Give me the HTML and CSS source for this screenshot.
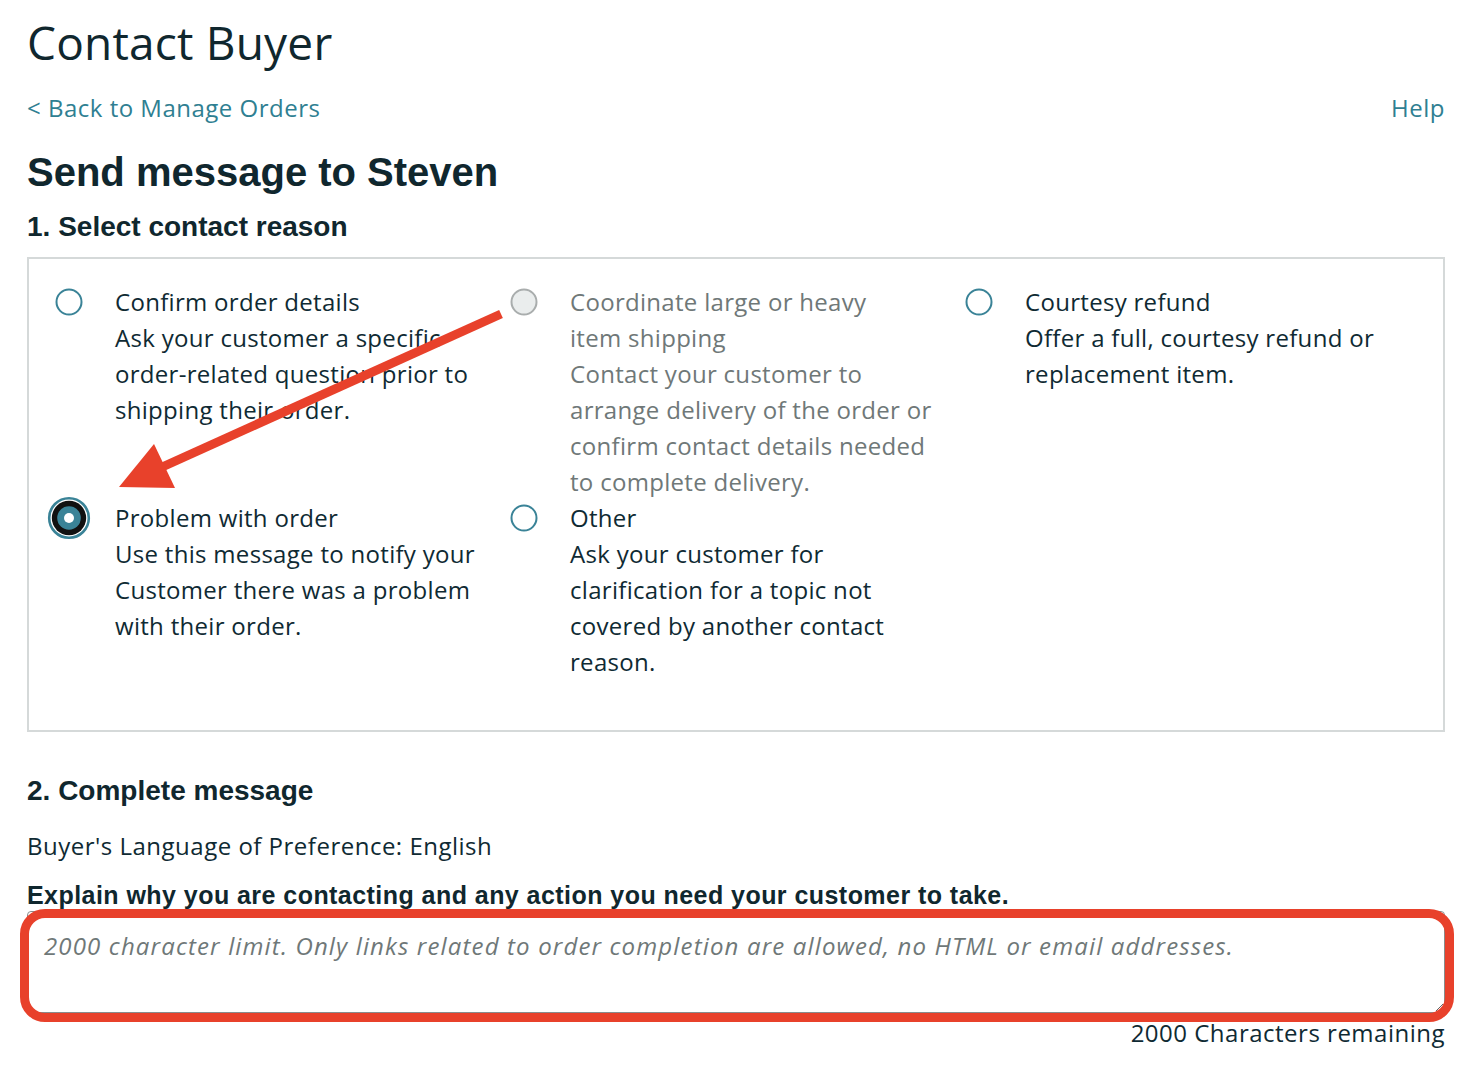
FILE: index.html
```html
<!DOCTYPE html>
<html lang="en">
<head>
<meta charset="utf-8">
<title>Contact Buyer</title>
<link rel="stylesheet" href="styles.css">
</head>
<body>
<div class="page">
  <h1 class="title">Contact Buyer</h1>
  <div class="nav">
    <a class="link" href="#">&lt; Back to Manage Orders</a>
    <a class="link" href="#">Help</a>
  </div>
  <h2 class="send">Send message to Steven</h2>
  <h3 class="step">1. Select contact reason</h3>
  <div class="reasons">
    <div class="reason">
      <span class="radio"><svg viewBox="0 0 28 28" width="28" height="28"><circle cx="14" cy="14" r="12.5" fill="#fff" stroke="#3a8397" stroke-width="2"/></svg></span>
      <div class="text">
        <div class="name">Confirm order details</div>
        <div class="desc">Ask your customer a specific order-related question prior to shipping their order.</div>
      </div>
    </div>
    <div class="reason disabled">
      <span class="radio"><svg viewBox="0 0 28 28" width="28" height="28"><circle cx="14" cy="14" r="12.5" fill="#eaeded" stroke="#a9adad" stroke-width="2"/></svg></span>
      <div class="text">
        <div class="name">Coordinate large or heavy<br>item shipping</div>
        <div class="desc">Contact your customer to arrange delivery of the order or confirm contact details needed to complete delivery.</div>
      </div>
    </div>
    <div class="reason">
      <span class="radio"><svg viewBox="0 0 28 28" width="28" height="28"><circle cx="14" cy="14" r="12.5" fill="#fff" stroke="#3a8397" stroke-width="2"/></svg></span>
      <div class="text">
        <div class="name">Courtesy refund</div>
        <div class="desc">Offer a full, courtesy refund or replacement item.</div>
      </div>
    </div>
    <div class="reason">
      <span class="radio selected"><svg viewBox="-8 -8 44 44" width="44" height="44"><circle cx="14" cy="14" r="19.8" fill="#fff" stroke="#3a8397" stroke-width="2.6"/><circle cx="14" cy="14" r="17.2" fill="#111"/><circle cx="14" cy="14" r="11.8" fill="#3a8397"/><circle cx="14" cy="14" r="5" fill="#fff"/></svg></span>
      <div class="text">
        <div class="name">Problem with order</div>
        <div class="desc">Use this message to notify your Customer there was a problem with their order.</div>
      </div>
    </div>
    <div class="reason">
      <span class="radio"><svg viewBox="0 0 28 28" width="28" height="28"><circle cx="14" cy="14" r="12.5" fill="#fff" stroke="#3a8397" stroke-width="2"/></svg></span>
      <div class="text">
        <div class="name">Other</div>
        <div class="desc">Ask your customer for clarification for a topic not covered by another contact reason.</div>
      </div>
    </div>
  </div>
  <h3 class="step step2">2. Complete message</h3>
  <p class="lang">Buyer's Language of Preference: English</p>
  <p class="explain">Explain why you are contacting and any action you need your customer to take.</p>
  <div class="msg">
    <textarea class="msg-input" placeholder="2000 character limit. Only links related to order completion are allowed, no HTML or email addresses."></textarea>
    <div class="highlight"></div>
  </div>
  <div class="remaining">2000 Characters remaining</div>
  <svg class="arrow" width="1476" height="1080" viewBox="0 0 1476 1080">
    <line x1="501" y1="314" x2="160" y2="468" stroke="#e8412b" stroke-width="9"/>
    <polygon points="119,487 154,444 175,488" fill="#e8412b"/>
  </svg>
</div>
</body>
</html>
```

FILE: styles.css
```css
html, body {
  margin: 0;
  padding: 0;
  background: #fff;
}

.page {
  position: relative;
  padding: 14px 31px 0 27px;
  font-family: "Open Sans", "Liberation Sans", sans-serif;
  color: #0f2a33;
  min-height: 1080px;
  box-sizing: border-box;
}

.title {
  margin: 0;
  font-size: 46px;
  letter-spacing: 0.2px;
  line-height: 56px;
  font-weight: 400;
  color: #10272e;
}

.nav {
  margin-top: 20px;
  display: flex;
  justify-content: space-between;
  font-size: 24px;
  letter-spacing: 0.5px;
  line-height: 36px;
}

.link {
  color: #2f7f92;
  text-decoration: none;
}

.send {
  margin: 23px 0 0;
  font-family: "Liberation Sans", Arial, sans-serif;
  font-weight: 700;
  font-size: 40px;
  line-height: 46px;
  color: #10272e;
}

.step {
  margin: 16px 0 0;
  font-family: "Liberation Sans", Arial, sans-serif;
  font-weight: 700;
  font-size: 28px;
  line-height: 32px;
  color: #10272e;
}

.reasons {
  margin-top: 14px;
  border: 2px solid #d5d9d9;
  padding: 25px 0 50px 26px;
  display: grid;
  grid-template-columns: repeat(3, 455px);
}

.reason {
  display: flex;
  align-items: flex-start;
  font-size: 24px;
  letter-spacing: 0.3px;
  line-height: 36px;
}

.radio {
  flex: none;
  width: 28px;
  height: 28px;
  margin-top: 4px;
  margin-right: 32px;
  display: block;
}

.radio svg {
  display: block;
}

.radio.selected svg {
  margin: -8px 0 0 -8px;
}

.text {
  width: 368px;
}

.disabled .text {
  color: #6f7878;
}

.step2 {
  margin-top: 43px;
}

.lang {
  margin: 21px 0 0;
  font-size: 24px;
  letter-spacing: 0.5px;
  line-height: 36px;
}

.explain {
  margin: 17px 0 0;
  font-family: "Liberation Sans", Arial, sans-serif;
  font-weight: 700;
  font-size: 25px;
  letter-spacing: 0.45px;
  line-height: 28px;
  color: #10272e;
}

.msg {
  position: relative;
  margin-top: 2px;
}

.msg-input {
  display: block;
  width: 100%;
  height: 102px;
  box-sizing: border-box;
  border: 1px solid #888c8c;
  border-radius: 4px;
  padding: 16px 16px;
  font-family: "Open Sans", "Liberation Sans", sans-serif;
  font-size: 24px;
  letter-spacing: 1.15px;
  line-height: 36px;
  color: #0f2a33;
  resize: vertical;
}

.msg-input::placeholder {
  color: #6f7878;
  font-style: italic;
}

.highlight {
  position: absolute;
  left: -7px;
  top: -2px;
  right: -9px;
  bottom: -9px;
  border: 9px solid #e8412b;
  border-radius: 25px;
  pointer-events: none;
}

.remaining {
  margin-top: 2px;
  text-align: right;
  font-size: 24px;
  letter-spacing: 0.5px;
  line-height: 36px;
}

.arrow {
  position: absolute;
  left: 0;
  top: 0;
  pointer-events: none;
}
```
